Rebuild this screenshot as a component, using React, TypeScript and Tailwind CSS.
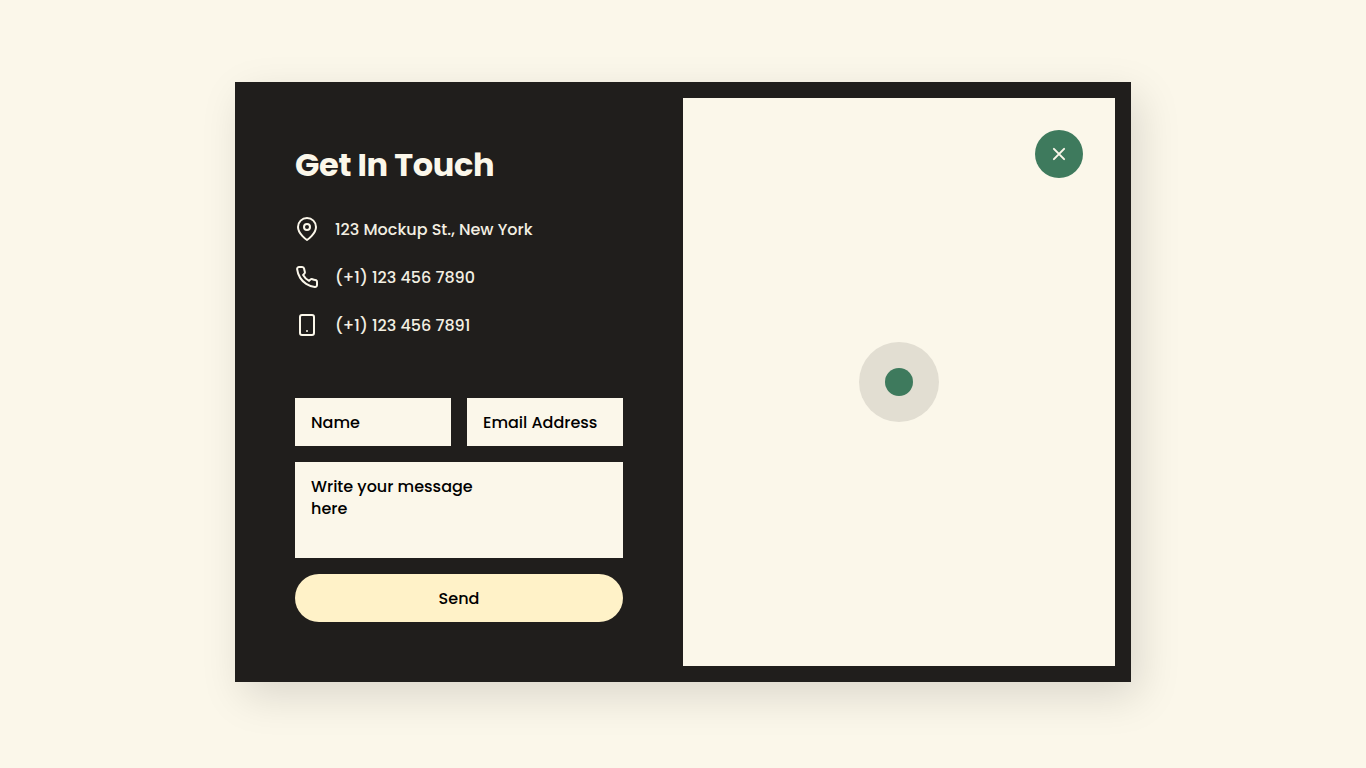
import type { ReactNode } from "react";

function Line({ icon, children }: { icon: ReactNode; children: ReactNode }) {
  return (
    <li className="flex h-6 items-center gap-4">
      <svg className="size-6 shrink-0" viewBox="0 0 24 24" fill="none" stroke="currentColor" strokeWidth="2" strokeLinecap="round" strokeLinejoin="round">
        {icon}
      </svg>
      <span className="pt-px text-[#f3efe2]">{children}</span>
    </li>
  );
}

const pin = (
  <>
    <path d="M21 10c0 7-9 13-9 13s-9-6-9-13a9 9 0 0 1 18 0z" />
    <circle cx="12" cy="10" r="3" />
  </>
);

const phone = (
  <path d="M22 16.92v3a2 2 0 0 1-2.18 2 19.79 19.79 0 0 1-8.63-3.07 19.5 19.5 0 0 1-6-6 19.79 19.79 0 0 1-3.07-8.67A2 2 0 0 1 4.11 2h3a2 2 0 0 1 2 1.72 12.84 12.84 0 0 0 .7 2.81 2 2 0 0 1-.45 2.11L8.09 9.91a16 16 0 0 0 6 6l1.27-1.27a2 2 0 0 1 2.11-.45 12.84 12.84 0 0 0 2.81.7A2 2 0 0 1 22 16.92z" />
);

const mobile = (
  <>
    <rect x="5" y="2" width="14" height="20" rx="2" />
    <path d="M12 18h.01" />
  </>
);

const field = "block w-full resize-none rounded-none bg-[#fbf7ea] px-4 text-base font-medium text-black outline-none placeholder:text-black";

export default function App() {
  return (
    <main className="flex h-screen items-center justify-center overflow-hidden bg-[#fbf7ea] pb-1 font-[Poppins,Inter,sans-serif] text-base font-medium">
      <section className="flex h-[600px] w-[896px] bg-[#201e1c] py-4 pr-4 text-[#fbf7ea] shadow-[8px_14px_40px_rgba(0,0,0,0.13)]">
        <div className="w-[448px] px-[60px] pt-[43px]">
          <h1 className="text-[32px] leading-12 font-bold tracking-[-0.36px]">Get In Touch</h1>
          <ul className="mt-7 space-y-6">
            <Line icon={pin}>123 Mockup St., New York</Line>
            <Line icon={phone}>(+1) 123 456 7890</Line>
            <Line icon={mobile}>(+1) 123 456 7891</Line>
          </ul>
          <form className="mt-[61px] grid grid-cols-2 gap-4" onSubmit={(e) => e.preventDefault()}>
            <input className={`${field} h-12`} placeholder="Name" />
            <input className={`${field} h-12`} placeholder="Email Address" />
            <textarea className={`${field} col-span-2 h-24 pt-[14px] leading-[22px]`} placeholder={"Write your message\nhere"} />
            <button className="col-span-2 h-12 rounded-full bg-[#fff2c8] pt-0.5 font-medium text-black">Send</button>
          </form>
        </div>
        <div className="relative flex flex-1 items-center justify-center bg-[#fbf7ea]">
          <button aria-label="Close" className="absolute top-8 right-8 flex size-12 items-center justify-center rounded-full bg-[#3e7a5d] text-[#fbf7ea]">
            <svg className="size-6" viewBox="0 0 24 24" fill="none" stroke="currentColor" strokeWidth="2" strokeLinecap="round">
              <path d="M6.9 6.9l10.2 10.2M17.1 6.9l-10.2 10.2" />
            </svg>
          </button>
          <div className="flex size-20 items-center justify-center rounded-full bg-[#e2ded2]">
            <div className="size-7 rounded-full bg-[#3e7a5d]" />
          </div>
        </div>
      </section>
    </main>
  );
}
